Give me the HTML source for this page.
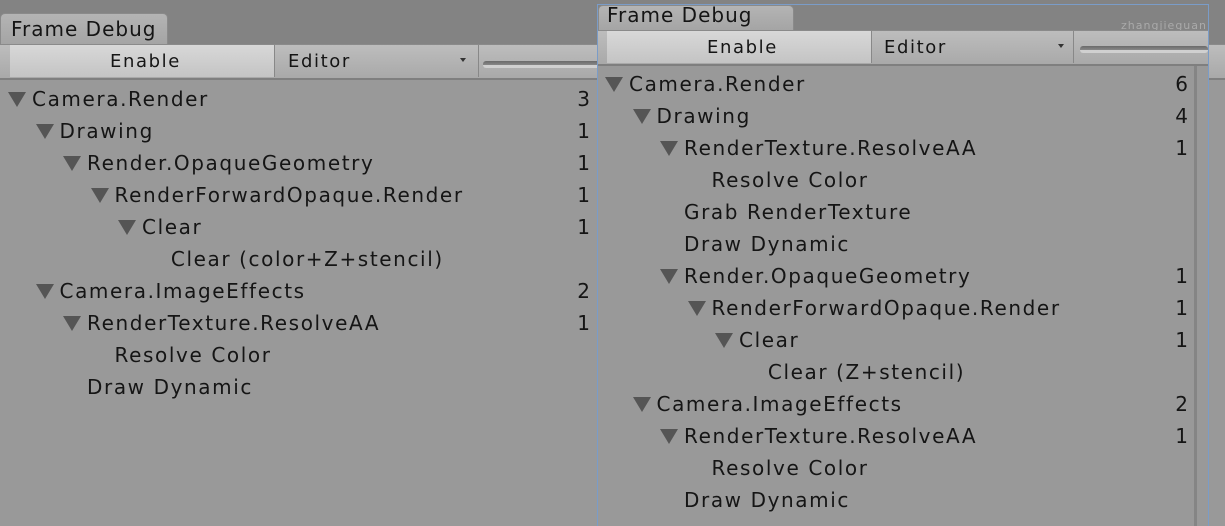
<!DOCTYPE html><html><head><style>
body{margin:0;width:1225px;height:526px;overflow:hidden;background:#999;position:relative;font-family:"DejaVu Sans",sans-serif;}
div{position:absolute;box-sizing:border-box}
.t{font-size:20px;letter-spacing:1.6px;color:#151515;line-height:24px;white-space:nowrap}
.tri{width:0;height:0;border-left:9px solid transparent;border-right:9px solid transparent;border-top:15px solid #555}
.n{font-size:20px;color:#151515;line-height:24px;text-align:right;width:30px}
.tab{background:linear-gradient(#b4b4b4,#a4a4a4);border:1px solid #8a8a8a;border-bottom:none;border-radius:5px 5px 0 0}
.bar{background:linear-gradient(#bdbdbd,#a9a9a9);border-top:1px solid #8a8a8a;border-bottom:2px solid #7f7f7f}
.btn{background:linear-gradient(#d8d8d8,#c4c4c4);border-right:1px solid #888}
.dd{border-right:1px solid #888}
.sl{height:7px;background:linear-gradient(#6a6a6a,#888);border-bottom:3px solid #d0d0d0;border-radius:3px}
</style></head><body>
<div style="left:0;top:0;width:1225px;height:44px;background:#838383"></div>
<div class="tab" style="left:0;top:13px;width:168px;height:32px"></div>
<div class="t" style="left:11px;top:17px;letter-spacing:1px">Frame Debug</div>
<div class="bar" style="left:0;top:44px;width:1225px;height:36px"></div>
<div class="btn" style="left:10px;top:45px;width:265px;height:32px"></div>
<div class="t" style="left:110px;top:50px;font-size:18px">Enable</div>
<div class="dd" style="left:275px;top:45px;width:204px;height:32px"></div>
<div class="t" style="left:288px;top:50px;font-size:18px">Editor</div>
<div style="left:460px;top:58px;border-left:3px solid transparent;border-right:3px solid transparent;border-top:4px solid #333"></div>
<div class="sl" style="left:483px;top:61px;width:120px"></div>
<div style="left:597px;top:4px;width:612px;height:522px;background:#999;border:1px solid #7a9cc8;border-bottom:none"></div>
<div style="left:598px;top:5px;width:610px;height:26px;background:#838383"></div>
<div class="tab" style="left:598px;top:5px;width:196px;height:26px"></div>
<div class="t" style="left:607px;top:3px;letter-spacing:1px">Frame Debug</div>
<div style="left:1121px;top:19px;font-size:11px;color:#aaa;letter-spacing:1px">zhangjieguan</div>
<div class="bar" style="left:598px;top:30px;width:610px;height:36px"></div>
<div class="btn" style="left:607px;top:31px;width:265px;height:32px"></div>
<div class="t" style="left:707px;top:36px;font-size:18px">Enable</div>
<div class="dd" style="left:872px;top:31px;width:202px;height:32px"></div>
<div class="t" style="left:884px;top:36px;font-size:18px">Editor</div>
<div style="left:1058px;top:44px;border-left:3px solid transparent;border-right:3px solid transparent;border-top:4px solid #333"></div>
<div class="sl" style="left:1080px;top:46px;width:128px"></div>
<div style="left:1194px;top:66px;width:3px;height:460px;background:#858585"></div>
<div style="left:1209px;top:0;width:16px;height:526px;background:#999"></div>
<div style="left:1209px;top:0;width:16px;height:44px;background:#838383"></div>
<div class="bar" style="left:1209px;top:44px;width:16px;height:36px"></div>
<div id="L"></div>
<script>
function rows(ox,oy,data,nx){let h='';data.forEach((r,i)=>{const[lv,txt,tri,num]=r;const y=oy+32*i;const tx=ox+32+27.5*lv;
if(tri)h+=`<div class="tri" style="left:${tx-24}px;top:${y-7}px"></div>`;
h+=`<div class="t" style="left:${tx}px;top:${y-12}px">${txt}</div>`;
if(num)h+=`<div class="n" style="left:${nx}px;top:${y-12}px">${num}</div>`;});return h;}
const A=[[0,'Camera.Render',1,'3'],[1,'Drawing',1,'1'],[2,'Render.OpaqueGeometry',1,'1'],[3,'RenderForwardOpaque.Render',1,'1'],[4,'Clear',1,'1'],[5.05,'Clear (color+Z+stencil)',0,''],[1,'Camera.ImageEffects',1,'2'],[2,'RenderTexture.ResolveAA',1,'1'],[3,'Resolve Color',0,''],[2,'Draw Dynamic',0,'']];
const B=[[0,'Camera.Render',1,'6'],[1,'Drawing',1,'4'],[2,'RenderTexture.ResolveAA',1,'1'],[3,'Resolve Color',0,''],[2,'Grab RenderTexture',0,''],[2,'Draw Dynamic',0,''],[2,'Render.OpaqueGeometry',1,'1'],[3,'RenderForwardOpaque.Render',1,'1'],[4,'Clear',1,'1'],[5.05,'Clear (Z+stencil)',0,''],[1,'Camera.ImageEffects',1,'2'],[2,'RenderTexture.ResolveAA',1,'1'],[3,'Resolve Color',0,''],[2,'Draw Dynamic',0,'']];
document.getElementById('L').outerHTML=rows(0,99,A,560)+rows(597,84,B,1158);
</script>
</body></html>
